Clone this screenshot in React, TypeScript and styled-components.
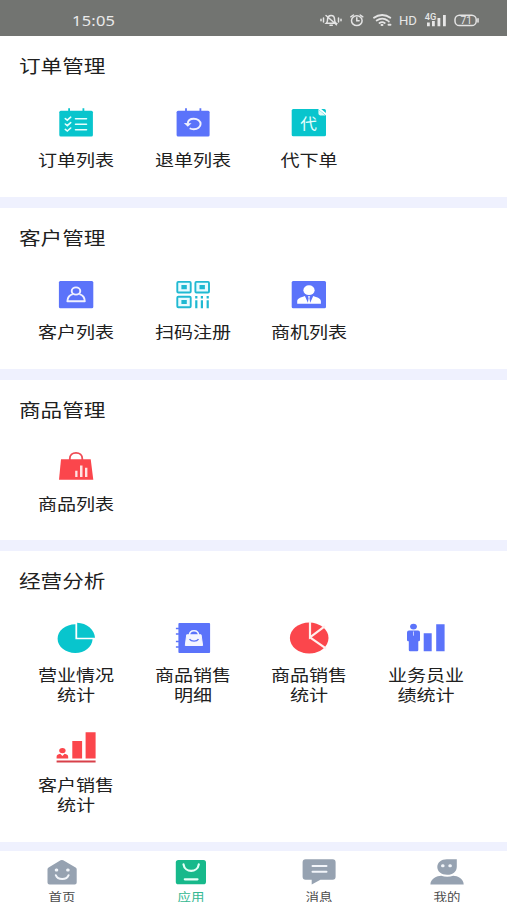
import React from "react";
import styled, { createGlobalStyle } from "styled-components";

const CYAN = "#08c5cd";
const BLUE = "#5b73fa";
const RED = "#fb464c";
const GREY = "#96a2b1";
const GREEN = "#17b98b";

const GlobalStyle = createGlobalStyle`
  * { box-sizing: border-box; }
  body { margin: 0; background: #fff; overflow: hidden; }
`;

const Screen = styled.div`
  display: flex;
  flex-direction: column;
  width: 507px;
  height: 902px;
  overflow: hidden;
  background: #eff1fe;
  font-family: Roboto, "Noto Sans CJK SC", sans-serif;
  color: #202020;
`;

const StatusBar = styled.header`
  flex: none;
  display: flex;
  align-items: center;
  justify-content: space-between;
  height: 36px;
  padding: 4px 25px 0 72px;
  background: #727471;
  color: #e9e9e9;
`;

const Clock = styled.span`
  font: 15px/20px "Noto Sans", sans-serif;
  letter-spacing: 0.2px;
  transform: scaleX(1.1);
  transform-origin: left;
`;

const Content = styled.main`
  flex: none;
  display: flex;
  flex-direction: column;
  gap: 11px;
`;

const Section = styled.section<{ $height: number }>`
  height: ${(p) => p.$height}px;
  padding: 17px 18px 0;
  background: #fff;
`;

const Title = styled.h2`
  width: max-content;
  margin: 0 0 0 0.5px;
  font-size: 18px;
  line-height: 28px;
  font-weight: 400;
  transform: scaleX(1.2);
  transform-origin: left;
`;

const Grid = styled.div`
  display: grid;
  grid-template-columns: repeat(4, 116.5px);
  grid-auto-rows: 109.5px;
  margin-top: 24px;
`;

const Entry = styled.div`
  display: flex;
  flex-direction: column;
  align-items: center;
`;

const Picture = styled.svg`
  flex: none;
  display: block;
  width: 44px;
  height: 36px;
`;

const Label = styled.div`
  margin-top: 10px;
  font-size: 16px;
  line-height: 20.4px;
  text-align: center;
  white-space: pre-line;
  transform: scaleX(1.19);
`;

const Nav = styled.nav`
  flex: none;
  display: grid;
  grid-template-columns: repeat(4, 128.4px);
  height: 60px;
  margin: 9px 0 0 -2px;
  background: #fff;
`;

const Tab = styled.div<{ $active?: boolean }>`
  display: flex;
  flex-direction: column;
  align-items: center;
  padding-top: 4px;
  color: ${(p) => (p.$active ? "#35b993" : "#4c4c4c")};
`;

const TabLabel = styled.span`
  font-size: 12px;
  line-height: 16px;
  margin-top: -1px;
  transform: scaleX(1.12);
`;

const OrderIcon = () => (
  <Picture viewBox="0 0 44 36">
    <rect x="5.3" y="5.8" width="33.6" height="25.8" rx="1.5" fill={CYAN} />
    <path d="M15.1 3.2v3M29.4 3.2v3" stroke={CYAN} strokeWidth="1.8" />
    <g fill="none" stroke="#e6fffd" strokeWidth="1.6" strokeLinecap="round">
      <path d="M11.3 13.6l2 1.6 3.4-3M11.3 19l2 1.6 3.4-3M11.3 24.4l2 1.6 3.4-3" />
      <path d="M21.5 13.7h11M21.5 19.2h11M21.5 24.8h11" />
    </g>
  </Picture>
);

const ReturnIcon = () => (
  <Picture viewBox="0 0 44 36">
    <rect x="5.6" y="5.8" width="33" height="25.8" rx="1.5" fill={BLUE} />
    <path d="M15 3.2v3M29.4 3.2v3" stroke={BLUE} strokeWidth="1.8" />
    <path d="M16.7 18.8c.2-3 2.7-5 6.1-5 3.8 0 6.8 2.3 6.8 5.3s-3 5.2-6.8 5.2c-1.7 0-3-.3-4.1-1" fill="none" stroke="#f1f2ff" strokeWidth="1.9" />
    <path d="M12.8 18l7.7.2-3.7 3.5z" fill="#f1f2ff" />
  </Picture>
);

const ProxyIcon = () => (
  <Picture viewBox="0 0 44 36">
    <path d="M6.3 4H31l8 6.5v19.2a1.6 1.6 0 0 1-1.6 1.6H6.3a1.6 1.6 0 0 1-1.6-1.6V5.6A1.6 1.6 0 0 1 6.3 4z" fill={CYAN} />
    <path d="M31.4 4.6l7.2 5.8h-5.4a1.8 1.8 0 0 1-1.8-1.8z" fill="#dffaf8" />
    <path d="M34.2 4h3.1a1.6 1.6 0 0 1 1.6 1.6V8z" fill={CYAN} />
    <text x="0" y="0" transform="translate(21.6 24) scale(1.15 1)" textAnchor="middle" fontSize="14.5" fill="#e3fffd">代</text>
  </Picture>
);

const CustomerIcon = () => (
  <Picture viewBox="0 0 44 36">
    <rect x="4.9" y="4" width="34.4" height="27.2" rx="1.5" fill={BLUE} />
    <g fill="none" stroke="#f1f2ff" strokeWidth="1.9" strokeLinejoin="round">
      <ellipse cx="22" cy="14" rx="4.3" ry="3.6" />
      <path d="M18.8 17.2c-3.5 1-5.3 3.3-5.4 7h17.4c-.1-3.7-1.9-6-5.4-7" />
    </g>
  </Picture>
);

const ScanIcon = () => (
  <Picture viewBox="0 0 44 36">
    <g fill="#e8fbff" stroke="#20b9d2" strokeWidth="1.9">
      <rect x="6.3" y="4.9" width="13.4" height="10.6" rx="1" />
      <rect x="24.4" y="4.9" width="13.6" height="10.6" rx="1" />
      <rect x="6.3" y="19.7" width="13.4" height="10.6" rx="1" />
    </g>
    <path d="M10.4 8.1h5.4v4.2h-5.4zM28.5 8.1h5.4v4.2h-5.4zM10.4 22.9h5.4v4.2h-5.4zM24.2 19h2.2v2.5h-2.2zM29.8 19H32v2.5h-2.2zM35.6 19h2.2v2.5h-2.2zM24.2 23.2h2.2v8h-2.2zM29.8 23.2H32v8h-2.2zM35.6 23.2h2.2v8h-2.2z" fill="#20b9d2" />
  </Picture>
);

const LeadIcon = () => (
  <Picture viewBox="0 0 44 36">
    <rect x="4.7" y="4" width="34.3" height="27.2" rx="1.5" fill={BLUE} />
    <ellipse cx="22" cy="13.2" rx="5.6" ry="4.9" fill="#fff" />
    <path d="M10.2 26.7v-2.3c0-2.2 2-3.6 7.7-5.3l3 6.7.7-4.8-.8-1.7h2.4l-.8 1.7.8 4.8 3-6.7c5.7 1.7 7.7 3.1 7.7 5.3v2.3z" fill="#fff" />
  </Picture>
);

const GoodsIcon = () => (
  <Picture viewBox="0 0 44 36">
    <path d="M7 10.3h29.7l2.6 20.5H5z" fill={RED} />
    <path d="M15.8 11.5V9.7C15.8 6.3 18.3 3.9 22 3.9s6.3 2.4 6.3 5.8v1.8" fill="none" stroke="#ef4c55" strokeWidth="1.8" />
    <path d="M21.2 21.8h2.3v6.3h-2.3zM26 16.5h2.5v11.6H26zM31 18.7h2.4v9.4H31z" fill="#ffe3e3" />
  </Picture>
);

const PieIcon = () => (
  <Picture viewBox="0 0 44 36">
    <path d="M21.4 4.3v14.9h17.2c-.5 7.8-8 13.7-17.3 13.7-9.8 0-17.7-6.3-17.7-14.2S11.5 4.3 21.4 4.3z" fill={CYAN} />
    <path d="M23.2 2.8c9.6.4 17.2 6.6 17.8 14.9H23.2z" fill={CYAN} />
  </Picture>
);

const DetailIcon = () => (
  <Picture viewBox="0 0 44 36">
    <rect x="7.4" y="2.9" width="31.7" height="30.2" rx="1" fill={BLUE} />
    <path d="M4.9 8.5h3M4.9 14h3M4.9 21.5h3M4.9 27h3" stroke={BLUE} strokeWidth="1.4" />
    <path d="M15.7 14.8h14.4l1.5 10.7H14.3z" fill="#f4f5ff" stroke="#f4f5ff" strokeLinejoin="round" />
    <path d="M18.4 15.5c0-3.3 1.8-4.8 4.6-4.8s4.6 1.5 4.6 4.8" fill="none" stroke="#f4f5ff" strokeWidth="1.5" />
    <path d="M18.5 19.2c1.8 2.5 7.3 2.5 9 0" fill="none" stroke={BLUE} strokeWidth="1.4" />
  </Picture>
);

const SalesPieIcon = () => (
  <Picture viewBox="0 0 44 36">
    <ellipse cx="22.2" cy="18" rx="19.3" ry="15.4" fill={RED} />
    <path d="M23 1.5v15.8L38 6.2M23 17.3l16.2 11.3" fill="none" stroke="#fff0ee" strokeWidth="2.2" />
  </Picture>
);

const StaffIcon = () => (
  <Picture viewBox="0 0 44 36">
    <ellipse cx="9.5" cy="6.6" rx="3.4" ry="2.9" fill={BLUE} />
    <path d="M5 10.4h9a2 2 0 0 1 2 2v7.4a1.5 1.5 0 0 1-1.7 1.5V30a1.2 1.2 0 0 1-1.2 1.2H6A1.2 1.2 0 0 1 4.8 30v-8.7A1.5 1.5 0 0 1 3 19.8v-7.4a2 2 0 0 1 2-2zM19.7 13.2h8v18h-8zM32.2 4.2h8.4v27h-8.4z" fill={BLUE} />
    <path d="M9.5 11.5v4.2" stroke="#c5cdff" strokeWidth="1" />
  </Picture>
);

const CustomerSalesIcon = () => (
  <Picture viewBox="0 0 44 36">
    <ellipse cx="8.4" cy="20.6" rx="3.2" ry="2.7" fill={RED} />
    <path d="M2.6 28.5v-1.8c0-1.7 1.6-2.6 3.6-3l2.2 2.3 2.2-2.3c2 .4 3.6 1.3 3.6 3v1.8zM18.3 11h9.8v17.6h-9.8zM31.6 2.2h10v26.4h-10z" fill={RED} />
    <path d="M2.6 31.5h39" stroke="#d84049" strokeWidth="1.8" />
  </Picture>
);

const HomeIcon = () => (
  <Picture viewBox="0 0 44 36">
    <path d="M20.6 5.3a2.6 2.6 0 0 1 2.6 0l12.4 7.1c.7.4 1.1 1 1.1 1.8v13.2a2 2 0 0 1-2 2H9.5a2 2 0 0 1-2-2V14.2c0-.8.4-1.4 1.1-1.8z" fill={GREY} />
    <g fill="none" stroke="#f2f5fa" strokeLinecap="round">
      <path d="M16.2 14.9h.6M27.6 14.9h.6" strokeWidth="3" />
      <path d="M15.8 20.2c2 5.2 10.8 5.2 12.8 0" strokeWidth="2" />
    </g>
  </Picture>
);

const AppsIcon = () => (
  <Picture viewBox="0 0 44 36">
    <rect x="6.8" y="5" width="30.2" height="24.3" rx="2.6" fill={GREEN} />
    <path d="M14.5 9.3c1.3 8.7 14 8.7 15.3 0M15.8 24.3h12.7" fill="none" stroke="#e4fff6" strokeWidth="2.2" strokeLinecap="round" />
  </Picture>
);

const MessageIcon = () => (
  <Picture viewBox="0 0 44 36">
    <path d="M8.6 4.2h27a3 3 0 0 1 3 3v14.6a3 3 0 0 1-3 3H23.4l-8.7 4.7v-4.7H8.6a3 3 0 0 1-3-3V7.2a3 3 0 0 1 3-3z" fill={GREY} />
    <path d="M15.5 11.1h14M15.5 16.8h14" stroke="#f2f5fa" strokeWidth="2" strokeLinecap="round" />
  </Picture>
);

const ProfileIcon = () => (
  <Picture viewBox="0 0 44 36">
    <path d="M21.8 4.2h10v7.2c0 5-3.6 8.3-9.7 8.3-5.8 0-9.8-3.2-9.8-7.7s4-7.8 9.5-7.8z" fill={GREY} />
    <path d="M17.5 10.8h.6M24.8 10.8h.6" stroke="#f2f5fa" strokeWidth="3" strokeLinecap="round" />
    <path d="M5.4 29.4c.1-5.7 6.4-8.6 10.8-8.7 3.8 1.3 8.3 1.3 12 0 4.4.1 10.5 3 10.5 8.7z" fill={GREY} />
  </Picture>
);

const StatusIcons = styled.svg`
  display: block;
  width: 163px;
  height: 20px;
  font-family: Roboto, sans-serif;
`;

const StatusSymbols = () => (
  <StatusIcons viewBox="319 10.5 163 20" fill="none" stroke="#e4e4e4" strokeWidth="1.5" strokeLinecap="round">
    <path d="M321 19.8v1.4M323.5 18.5v4M338.5 18.5v4M341 19.8v1.4M326.3 23.7h9.7c-1.7-1.3-1.4-2.7-1.5-4.2-.2-4.5-6.4-4.7-6.9-.2-.2 1.6.2 3-1.3 4.4zM330 25.8h2.3M326 16l10.5 9.2" />
    <ellipse cx="356.8" cy="21.2" rx="5.3" ry="4.9" />
    <path d="M356.8 18.3v3h2.3M350.8 17.3l2.6-1.8M360.2 15.5l2.6 1.8" />
    <path d="M374 18.2c4.8-3.7 11.5-3.7 16.3 0M376.7 21c3.4-2.4 7.8-2.4 10.8 0M379.5 23.5c1.8-1.2 3.5-1.2 5.2 0M381.5 25.5h1M388.8 22v.1M388.5 25.3h2" strokeWidth="1.9" />
    <g fill="#e7e7e7" stroke="none">
      <text x="399" y="25.7" fontSize="13" textLength="18" lengthAdjust="spacingAndGlyphs">HD</text>
      <text x="424.8" y="20.3" fontSize="8.5" fontWeight="500" textLength="11.5" lengthAdjust="spacingAndGlyphs">4G</text>
      <path d="M427 23h2.8v3.8H427zM432 21.5h2.8v5.3H432zM437.5 18.5h2.8v8.3h-2.8zM443 15.4h2.8v11.4H443z" />
      <text x="460.4" y="24.7" fontSize="10.5" textLength="11.5" lengthAdjust="spacingAndGlyphs">71</text>
    </g>
    <rect x="455" y="15.7" width="21.2" height="10.4" rx="4.4" />
    <path d="M478 19.4v3" strokeWidth="1.6" />
  </StatusIcons>
);

type Item = { label: string; Icon: React.ComponentType };

const sections: { title: string; height: number; items: Item[] }[] = [
  {
    title: "订单管理",
    height: 161,
    items: [
      { label: "订单列表", Icon: OrderIcon },
      { label: "退单列表", Icon: ReturnIcon },
      { label: "代下单", Icon: ProxyIcon },
    ],
  },
  {
    title: "客户管理",
    height: 161,
    items: [
      { label: "客户列表", Icon: CustomerIcon },
      { label: "扫码注册", Icon: ScanIcon },
      { label: "商机列表", Icon: LeadIcon },
    ],
  },
  { title: "商品管理", height: 160, items: [{ label: "商品列表", Icon: GoodsIcon }] },
  {
    title: "经营分析",
    height: 291,
    items: [
      { label: "营业情况\n统计", Icon: PieIcon },
      { label: "商品销售\n明细", Icon: DetailIcon },
      { label: "商品销售\n统计", Icon: SalesPieIcon },
      { label: "业务员业\n绩统计", Icon: StaffIcon },
      { label: "客户销售\n统计", Icon: CustomerSalesIcon },
    ],
  },
];

const tabs: Item[] = [
  { label: "首页", Icon: HomeIcon },
  { label: "应用", Icon: AppsIcon },
  { label: "消息", Icon: MessageIcon },
  { label: "我的", Icon: ProfileIcon },
];

export default function App() {
  return (
    <>
      <GlobalStyle />
      <Screen>
        <StatusBar>
          <Clock>15:05</Clock>
          <StatusSymbols />
        </StatusBar>
        <Content>
          {sections.map(({ title, height, items }) => (
            <Section key={title} $height={height}>
              <Title>{title}</Title>
              <Grid>
                {items.map(({ label, Icon }) => (
                  <Entry key={label}>
                    <Icon />
                    <Label>{label}</Label>
                  </Entry>
                ))}
              </Grid>
            </Section>
          ))}
        </Content>
        <Nav>
          {tabs.map(({ label, Icon }) => (
            <Tab key={label} $active={label === "应用"}>
              <Icon />
              <TabLabel>{label}</TabLabel>
            </Tab>
          ))}
        </Nav>
      </Screen>
    </>
  );
}
